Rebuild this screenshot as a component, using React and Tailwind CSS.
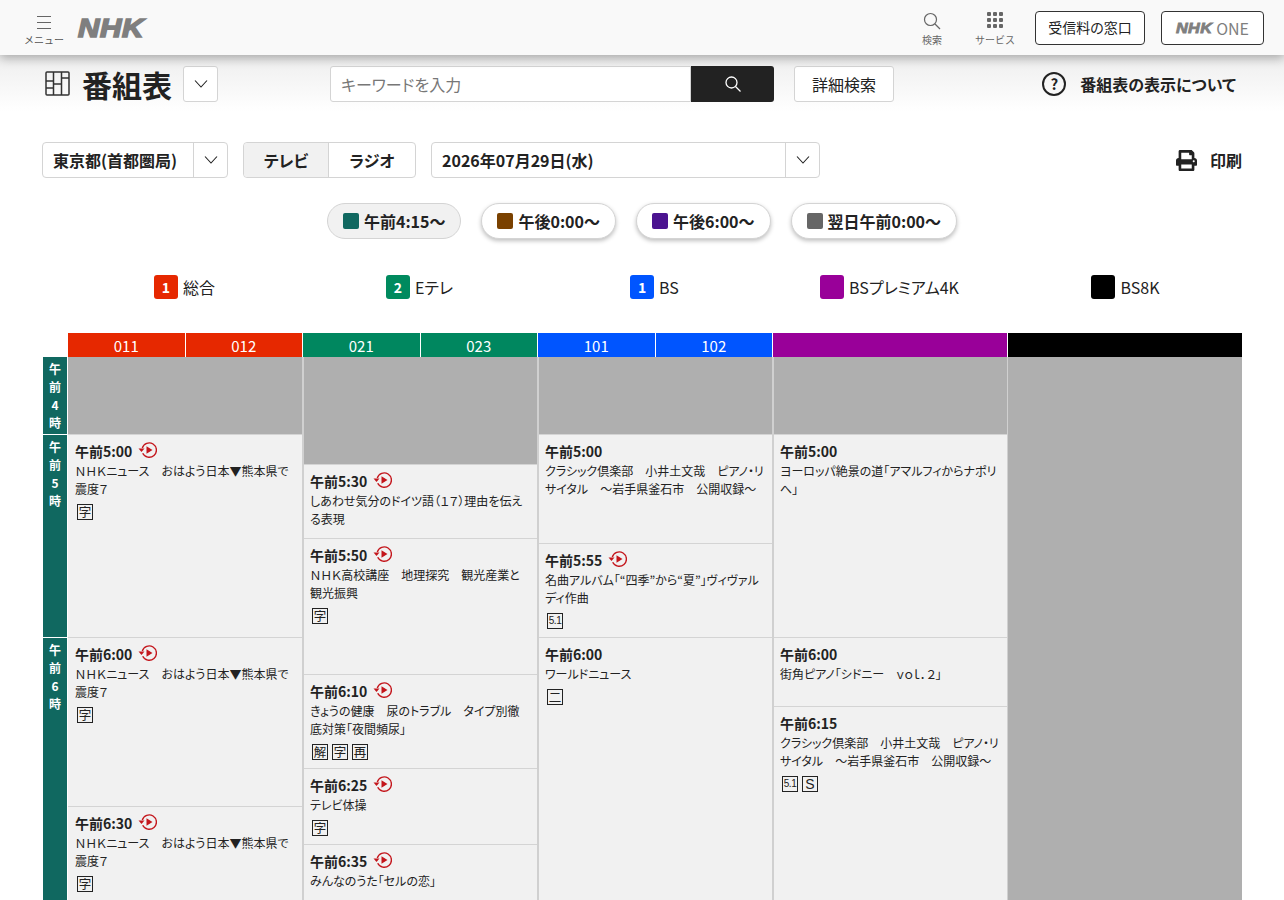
import React from 'react';
import { FaPrint } from 'react-icons/fa';

const F = "font-['Noto_Sans_CJK_JP','Noto_Sans',sans-serif] [font-feature-settings:'palt']";

function Replay() {
  return (
    <svg width="19" height="18" viewBox="0 0 19 18" fill="none" className="mb-[2px] shrink-0">
      <path d="M4.300 7a7.200 7.200 0 1 1 .4 5.200" stroke="#c4161c" strokeWidth="1.400" />
      <path d="M.5 7.600h6L3.500 11z" fill="#c4161c" />
      <path d="M8.500 5.200v7.600l6-3.800z" fill="#c4161c" />
    </svg>
  );
}

function Chevron() {
  return (
    <svg width="16" height="10" viewBox="0 0 16 10" fill="none">
      <path d="M2 1.500l6 6.500 6-6.500" stroke="#222" strokeWidth="1.100" />
    </svg>
  );
}

function Tag({ t }) {
  const small = t === '5.1';
  const latin = t === 'S';
  return (
    <span className={`flex h-[16px] w-[16px] items-center justify-center border border-[#222] leading-none text-[#222] ${small ? "font-['Liberation_Sans',sans-serif] text-[10px] tracking-[-0.5px]" : latin ? "font-['Liberation_Sans',sans-serif] text-[14px]" : 'text-[12.500px]'}`}>
      {t}
    </span>
  );
}

function Program({ time, title, tags = [], replay, h, first }) {
  return (
    <div className={`${h} overflow-hidden border-t border-[#d4d4d4] bg-[#f1f1f1] pr-[6px] pt-[5px] ${first ? 'pl-[7px]' : 'pl-[6px]'}`}>
      <div className="flex h-[22px] items-center gap-[6px]">
        <span className="text-[14px] font-bold leading-none text-[#222]">{time}</span>
        {replay && <Replay />}
      </div>
      <p className="text-[12px] leading-[18px] text-[#222]">{title}</p>
      {tags.length > 0 && (
        <div className="mt-[6px] flex gap-[4px] pl-[2px]">
          {tags.map((t, i) => <Tag key={i} t={t} />)}
        </div>
      )}
    </div>
  );
}

const news = 'ＮＨＫニュース　おはよう日本▼熊本県で震度７';
const classic = 'クラシック倶楽部　小井土文哉　ピアノ・リサイタル　～岩手県釜石市　公開収録～';

const cols = [
  {
    gray: 'h-[77px]',
    items: [
      { time: '午前5:00', title: news, tags: ['字'], replay: true, h: 'h-[203px]' },
      { time: '午前6:00', title: news, tags: ['字'], replay: true, h: 'h-[169px]' },
      { time: '午前6:30', title: news, tags: ['字'], replay: true, h: 'h-[169px]' },
    ],
  },
  {
    gray: 'h-[107px]',
    items: [
      { time: '午前5:30', title: 'しあわせ気分のドイツ語（１７）理由を伝える表現', replay: true, h: 'h-[74px]' },
      { time: '午前5:50', title: 'ＮＨＫ高校講座　地理探究　観光産業と観光振興', tags: ['字'], replay: true, h: 'h-[136px]' },
      { time: '午前6:10', title: 'きょうの健康　尿のトラブル　タイプ別徹底対策「夜間頻尿」', tags: ['解', '字', '再'], replay: true, h: 'h-[94px]' },
      { time: '午前6:25', title: 'テレビ体操', tags: ['字'], replay: true, h: 'h-[76px]' },
      { time: '午前6:35', title: 'みんなのうた「セルの恋」', replay: true, h: 'h-[100px]' },
    ],
  },
  {
    gray: 'h-[77px]',
    items: [
      { time: '午前5:00', title: classic, h: 'h-[109px]' },
      { time: '午前5:55', title: '名曲アルバム「“四季”から“夏”」ヴィヴァルディ作曲', tags: ['5.1'], replay: true, h: 'h-[94px]' },
      { time: '午前6:00', title: 'ワールドニュース', tags: ['二'], h: 'h-[338px]' },
    ],
  },
  {
    gray: 'h-[77px]',
    items: [
      { time: '午前5:00', title: 'ヨーロッパ絶景の道「アマルフィからナポリへ」', h: 'h-[203px]' },
      { time: '午前6:00', title: '街角ピアノ「シドニー　ｖｏｌ．２」', h: 'h-[69px]' },
      { time: '午前6:15', title: classic, tags: ['5.1', 'S'], h: 'h-[269px]' },
    ],
  },
];

function Nhk({ cls }) {
  return (
    <span className={`inline-block origin-left font-['Liberation_Sans',sans-serif] font-bold italic ${cls}`}>NHK</span>
  );
}

function Pill({ color, label, active }) {
  return (
    <div className={`flex h-[36px] items-center gap-[5px] rounded-full border border-[#d4d4d4] px-[15px] text-[16px] font-bold text-[#222] ${active ? 'bg-[#f1f1f1]' : 'bg-white shadow-[0_2px_4px_rgba(0,0,0,0.25)]'}`}>
      <span className={`h-[16px] w-[16px] rounded-[2px] ${color}`} />
      {label}
    </div>
  );
}

function Legend({ n, color, label, cls = '' }) {
  return (
    <div className={`flex w-[235px] items-center justify-center gap-[5px] text-[16px] text-[#222] ${cls}`}>
      <span className={`flex h-[24px] w-[24px] items-center justify-center rounded-[3px] text-[14px] font-bold text-white ${color}`}>{n}</span>
      {label}
    </div>
  );
}

export default function App() {
  return (
    <div className={`${F} h-[900px] overflow-hidden bg-white`}>
      <header className="relative z-10 flex h-[55px] items-center justify-between bg-[#f9f9f9] pl-[24px] pr-[20px] shadow-[0_3px_10px_rgba(0,0,0,0.3)]">
        <div className="flex items-center gap-[14px]">
          <div className="flex flex-col items-center pt-[6px]">
            <svg width="16" height="15" viewBox="0 0 16 15" fill="none" stroke="#666" strokeWidth="1.100">
              <path d="M1 1.500h14M1 7.500h14M1 13.500h14" />
            </svg>
            <span className="mt-[3px] text-[10px] leading-[14px] text-[#555] [font-feature-settings:normal]">メニュー</span>
          </div>
          <Nhk cls="scale-x-[1.14] text-[26px] leading-none tracking-[0.5px] text-[#7f7f7f] [-webkit-text-stroke:1.600px_#7f7f7f]" />
        </div>
        <div className="flex items-center">
          <div className="flex w-[40px] flex-col items-center pt-[3px]">
            <svg width="18" height="18" viewBox="0 0 18 18" fill="none" stroke="#666" strokeWidth="1.200">
              <circle cx="7.500" cy="7.500" r="6" />
              <path d="M12 12l5 5" />
            </svg>
            <span className="mt-[3px] text-[10px] leading-[14px] text-[#666]">検索</span>
          </div>
          <div className="ml-[23px] flex w-[40px] flex-col items-center pt-[3px]">
            <svg width="16" height="16" viewBox="0 0 16 16" fill="#666">
              {[0, 6, 12].map((y) => [0, 6, 12].map((x) => <rect key={`${x}${y}`} x={x} y={y} width="4" height="4" rx="1" />))}
            </svg>
            <span className="mt-[5px] whitespace-nowrap text-[10px] leading-[14px] text-[#666] [font-feature-settings:normal]">サービス</span>
          </div>
          <div className="ml-[20px] flex h-[34px] w-[110px] items-center justify-center rounded-[4px] border border-[#333] bg-white text-[14px] text-[#222]">受信料の窓口</div>
          <div className="ml-[16px] flex h-[34px] w-[103px] items-center justify-center rounded-[4px] border border-[#333] bg-white text-[16px] text-[#7f7f7f]">
            <Nhk cls="mr-[9px] scale-x-[1.16] text-[14px] leading-none tracking-[0.3px] [-webkit-text-stroke:0.800px_#7f7f7f]" />
            ONE
          </div>
        </div>
      </header>

      <div className="flex h-[57px] items-center bg-gradient-to-b from-[#eeeeee] to-[#ffffff] pl-[45px] pr-[48px]">
        <svg width="25" height="25" viewBox="0 0 25 25" fill="none" stroke="#333" strokeWidth="1.500">
          <rect x="1" y="1" width="23" height="23" rx="1" />
          <path d="M8.500 1v23M16.500 1v23M1 10h7.500M1 17h7.500M8.500 13h8M16.500 7h7.500" />
        </svg>
        <h1 className="ml-[12px] text-[30px] font-bold leading-none text-[#222] [font-feature-settings:normal]">番組表</h1>
        <div className="ml-[11px] flex h-[36px] w-[35px] items-center justify-center rounded-[3px] border border-[#d4d4d4] bg-white"><Chevron /></div>
        <div className="ml-[112px] flex h-[36px] w-[444px]">
          <div className="flex flex-1 items-center rounded-l-[3px] border border-[#d4d4d4] bg-white pl-[10px] text-[16px] text-[#777]">キーワードを入力</div>
          <div className="flex w-[83px] items-center justify-center rounded-r-[3px] bg-[#222]">
            <svg width="18" height="18" viewBox="0 0 18 18" fill="none" stroke="#fff" strokeWidth="1.300">
              <circle cx="7.500" cy="7.500" r="5.500" />
              <path d="M11.500 11.500l5 5" />
            </svg>
          </div>
        </div>
        <div className="ml-[20px] flex h-[36px] w-[100px] items-center justify-center rounded-[3px] border border-[#d4d4d4] bg-white text-[16px] text-[#222]">詳細検索</div>
        <div className="ml-auto flex items-center gap-[14px] text-[16px] font-bold text-[#222]">
          <span className="flex h-[24px] w-[24px] items-center justify-center rounded-full border-2 border-[#222] text-[15px] font-bold leading-none">?</span>
          番組表の表示について
        </div>
      </div>

      <div className="mt-[30px] flex h-[36px] items-center px-[42px]">
        <div className="flex h-[36px] w-[186px] rounded-[4px] border border-[#d4d4d4]">
          <div className="flex flex-1 items-center pl-[10px] text-[16px] font-bold text-[#222]">東京都(首都圏局)</div>
          <div className="flex w-[34px] items-center justify-center border-l border-[#d4d4d4]"><Chevron /></div>
        </div>
        <div className="ml-[15px] flex h-[36px] w-[173px] rounded-[4px] border border-[#d4d4d4] text-[16px] font-bold text-[#222]">
          <div className="flex w-[85px] items-center justify-center rounded-l-[4px] border-r border-[#d4d4d4] bg-[#f1f1f1]">テレビ</div>
          <div className="flex flex-1 items-center justify-center">ラジオ</div>
        </div>
        <div className="ml-[15px] flex h-[36px] w-[389px] rounded-[4px] border border-[#d4d4d4]">
          <div className="flex flex-1 items-center pl-[10px] text-[16px] font-bold text-[#222]">2026年07月29日(水)</div>
          <div className="flex w-[34px] items-center justify-center border-l border-[#d4d4d4]"><Chevron /></div>
        </div>
        <div className="ml-auto flex items-center gap-[13px] text-[16px] font-bold text-[#222]">
          <FaPrint size={21} color="#222" />
          印刷
        </div>
      </div>

      <div className="mt-[25px] flex justify-center gap-[20px]">
        <Pill color="bg-[#106860]" label="午前4:15～" active />
        <Pill color="bg-[#7a4100]" label="午後0:00～" />
        <Pill color="bg-[#4b1390]" label="午後6:00～" />
        <Pill color="bg-[#666666]" label="翌日午前0:00～" />
      </div>

      <div className="mt-[36px] flex pl-[67px]">
        <Legend n="1" color="bg-[#e62800]" label="総合" />
        <Legend n="2" color="bg-[#008a5e]" label="Eテレ" />
        <Legend n="1" color="bg-[#0055ff]" label="BS" />
        <Legend n="" color="bg-[#990099]" label="BSプレミアム4K" />
        <Legend n="" color="bg-black" label="BS8K" cls="ml-[1px]" />
      </div>

      <div className="mt-[34px] pl-[43px] pr-[42px]">
        <div className="ml-[25px] grid h-[24px] grid-cols-[235px_235px_235px_235px_1fr] text-[15px] text-white">
          {[['011', '012', 'bg-[#e62800]'], ['021', '023', 'bg-[#00875f]'], ['101', '102', 'bg-[#0055ff]']].map(([a, b, c]) => (
            <div key={a} className="border-r border-white">
              <div className={`flex h-full ${c}`}>
                <span className="flex-1 text-center leading-[25px]">{a}</span>
                <span className="flex-1 border-l border-white text-center leading-[25px]">{b}</span>
              </div>
            </div>
          ))}
          <div className="border-r border-white"><div className="h-full bg-[#990099]" /></div>
          <div className="bg-black" />
        </div>
        <div className="flex">
          <div className="flex w-[25px] shrink-0 flex-col gap-[1px] pr-[1px] text-center text-[12px] font-bold leading-[18px] text-white">
            {[['4', 'h-[77px]'], ['5', 'h-[202px]'], ['6', 'h-[300px]']].map(([n, h]) => (
              <div key={n} className={`${h} bg-[#106860] pt-[3px]`}>
                <div>午</div><div>前</div><div>{n}</div><div>時</div>
              </div>
            ))}
          </div>
          <div className="grid flex-1 grid-cols-[235px_235px_235px_235px_1fr]">
            {cols.map((c, i) => (
              <div key={i} className={`border-r border-[#d0d0d0] ${i > 0 ? 'border-l' : ''}`}>
                <div className={`${c.gray} bg-[#afafaf]`} />
                {c.items.map((p, j) => <Program key={j} first={i === 0} {...p} />)}
              </div>
            ))}
            <div className="h-[600px] bg-[#afafaf]" />
          </div>
        </div>
      </div>
    </div>
  );
}
